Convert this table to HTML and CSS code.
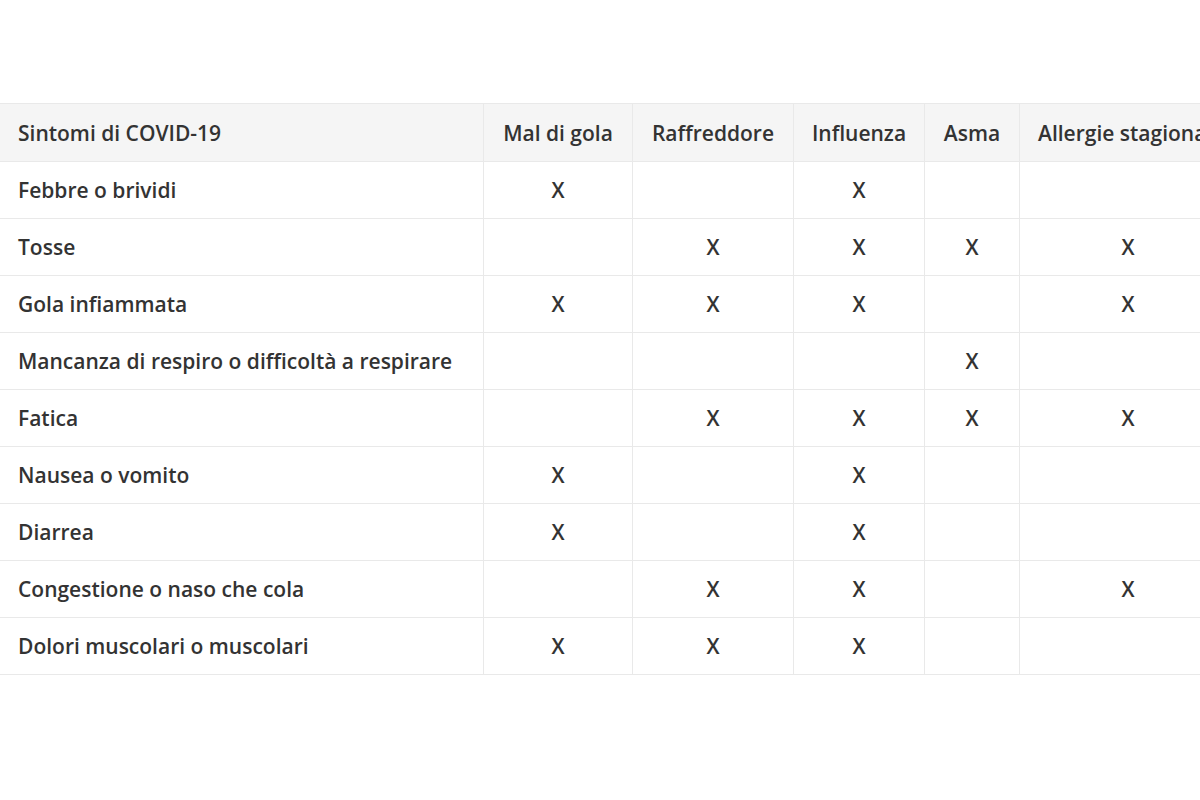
FILE: index.html
```html
<!DOCTYPE html>
<html lang="it">
<head>
<meta charset="utf-8">
<link rel="stylesheet" href="styles.css">
</head>
<body>
<div class="page">
<table class="sym">
<colgroup>
<col class="c0"><col class="c1"><col class="c2"><col class="c3"><col class="c4"><col class="c5">
</colgroup>
<thead>
<tr><th class="lbl">Sintomi di COVID-19</th><th>Mal di gola</th><th>Raffreddore</th><th>Influenza</th><th>Asma</th><th class="last">Allergie stagionali</th></tr>
</thead>
<tbody>
<tr><td class="lbl">Febbre o brividi</td><td>X</td><td></td><td>X</td><td></td><td></td></tr>
<tr><td class="lbl">Tosse</td><td></td><td>X</td><td>X</td><td>X</td><td>X</td></tr>
<tr><td class="lbl">Gola infiammata</td><td>X</td><td>X</td><td>X</td><td></td><td>X</td></tr>
<tr><td class="lbl">Mancanza di respiro o difficoltà a respirare</td><td></td><td></td><td></td><td>X</td><td></td></tr>
<tr><td class="lbl">Fatica</td><td></td><td>X</td><td>X</td><td>X</td><td>X</td></tr>
<tr><td class="lbl">Nausea o vomito</td><td>X</td><td></td><td>X</td><td></td><td></td></tr>
<tr><td class="lbl">Diarrea</td><td>X</td><td></td><td>X</td><td></td><td></td></tr>
<tr><td class="lbl">Congestione o naso che cola</td><td></td><td>X</td><td>X</td><td></td><td>X</td></tr>
<tr><td class="lbl">Dolori muscolari o muscolari</td><td>X</td><td>X</td><td>X</td><td></td><td></td></tr>
</tbody>
</table>
</div>
</body>
</html>
```
FILE: styles.css
```css
html, body {
  margin: 0;
  padding: 0;
  background: #fff;
  overflow: hidden;
}
.page {
  width: 1200px;
  height: 800px;
  overflow: hidden;
  padding-top: 103px;
  box-sizing: border-box;
}
.sym {
  table-layout: fixed;
  border-collapse: collapse;
  width: 1237px;
  margin-left: -1px;
  font-family: "Open Sans", "Liberation Sans", sans-serif;
  color: #333;
  font-size: 21px;
}
.c0 { width: 484px; }
.c1 { width: 149px; }
.c2 { width: 161px; }
.c3 { width: 131px; }
.c4 { width: 95px; }
.c5 { width: 217px; }
.sym th, .sym td {
  border: 1px solid #e9e9e9;
  height: 56px;
  padding: 0;
  text-align: center;
  vertical-align: middle;
  white-space: nowrap;
  overflow: hidden;
  font-weight: 600;
}
.sym th {
  background: #f5f5f5;
  height: 57px;
}
.sym .lbl {
  text-align: left;
  padding-left: 18px;
}
.sym .last {
  text-align: left;
  padding-left: 18px;
}
```
